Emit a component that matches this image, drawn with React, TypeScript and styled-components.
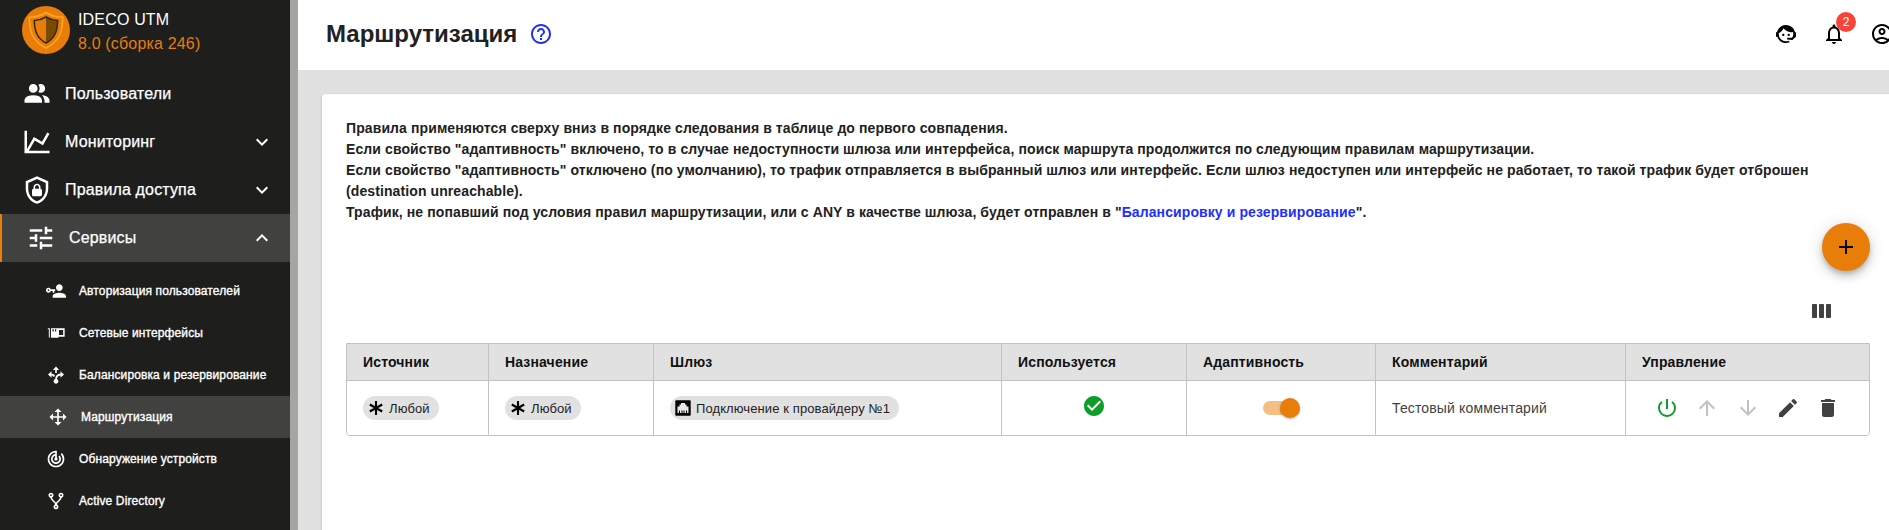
import React from 'react';
import styled, { createGlobalStyle } from 'styled-components';
import {
  MdAdd, MdArrowDownward, MdArrowUpward, MdCheckCircle, MdDelete, MdEdit, MdExpandLess, MdExpandMore,
  MdHelpOutline, MdNotificationsNone, MdOutlineAccountCircle, MdPowerSettingsNew, MdTrackChanges, MdTune,
} from 'react-icons/md';

const Global = createGlobalStyle`
  * { box-sizing: border-box; }
  html, body { margin: 0; overflow: hidden; }
  body { font-family: "Liberation Sans", Arial, sans-serif; font-size: 14px; color: #212121; background: #e1e1e1; }
  svg { display: block; flex: none; }
`;

const Page = styled.div`
  display: flex;
  width: 100%;
  height: 530px;
  overflow: hidden;
`;

const Sidebar = styled.nav`
  flex: none;
  width: 298px;
  background: #1e1e1c;
  border-right: 8px solid #a6a5a1;
  color: #fff;
`;

const Brand = styled.div`
  display: flex;
  height: 70px;
  padding: 6px 0 0 22px;
  gap: 8px;
`;

const BrandText = styled.div`
  padding-top: 2px;
  font-size: 16px;
  line-height: 24px;
  letter-spacing: 0.17px;
`;

const Version = styled.div`
  color: #e87d09;
`;

const NavRow = styled.div<{ $active?: boolean }>`
  display: flex;
  align-items: center;
  height: 48px;
  padding: 0 16px 0 ${p => (p.$active ? 24 : 22)}px;
  border-left: ${p => (p.$active ? '2px solid #e87d09' : '0')};
  background: ${p => (p.$active ? '#414140' : 'transparent')};
  font-size: 16px;
  letter-spacing: 0.15px;
  -webkit-text-stroke: 0.25px #fff;
  svg { stroke-width: 0; }
`;

const NavLabel = styled.span`
  flex: 1;
  margin-left: 13px;
`;

const SubList = styled.div`
  padding-top: 8px;
`;

const SubRow = styled.div<{ $active?: boolean }>`
  display: flex;
  align-items: center;
  gap: 13px;
  height: 42px;
  padding-left: ${p => (p.$active ? 48 : 46)}px;
  background: ${p => (p.$active ? '#414140' : 'transparent')};
  font-size: 12px;
  letter-spacing: 0.12px;
  white-space: nowrap;
  -webkit-text-stroke: 0.35px #fff;
  svg { stroke-width: 0; }
`;

const Main = styled.main`
  flex: none;
  width: 1620px;
`;

const Header = styled.header`
  display: flex;
  align-items: center;
  height: 70px;
  padding: 0 24px 0 28px;
  background: #fff;
`;

const Title = styled.h1`
  margin: 0 12px 2px 0;
  font-size: 24px;
  line-height: 28px;
  font-weight: 700;
`;

const HelpIcon = styled(MdHelpOutline)`
  margin-top: -2px;
  color: #1f2fff;
`;

const HeaderActions = styled.div`
  display: flex;
  gap: 24px;
  margin: -2px 0 0 auto;
  color: #000;
`;

const BellWrap = styled.div`
  position: relative;
`;

const Badge = styled.span`
  position: absolute;
  left: 14px;
  top: -10px;
  width: 20px;
  height: 20px;
  border-radius: 50%;
  background: #f8433a;
  color: #fff;
  font: 12px/20px Roboto, sans-serif;
  text-align: center;
`;

const Card = styled.section`
  height: 500px;
  margin: 24px 24px 0;
  padding: 24px;
  background: #fff;
  border-radius: 4px;
  box-shadow: 0 1px 3px rgba(0, 0, 0, 0.2);
`;

const Info = styled.p`
  margin: 0;
  font-weight: 700;
  line-height: 21px;
  letter-spacing: 0.1px;
  white-space: nowrap;
`;

const Link = styled.a`
  color: #1f2fff;
`;

const Fab = styled.button`
  display: flex;
  align-items: center;
  justify-content: center;
  width: 48px;
  height: 48px;
  margin: 0 0 0 auto;
  padding: 0;
  border: 0;
  border-radius: 50%;
  background: #e87d09;
  color: #000;
  box-shadow: 0 3px 5px -1px rgba(0, 0, 0, 0.2), 0 6px 10px rgba(0, 0, 0, 0.14), 0 1px 18px rgba(0, 0, 0, 0.12);
`;

const TableTools = styled.div`
  display: flex;
  justify-content: flex-end;
  height: 72px;
  padding: 33px 38px 0 0;
`;

const Table = styled.div`
  width: 1524px;
  border: 1px solid #c2c2c2;
  border-radius: 0 0 4px 4px;
  overflow: hidden;
`;

const Row = styled.div<{ $head?: boolean }>`
  display: grid;
  grid-template-columns: 141px 165px 348px 185px 189px 250px 244px;
  height: ${p => (p.$head ? 36 : 54)}px;
  background: ${p => (p.$head ? '#e1e1e1' : '#fff')};
  border-bottom: ${p => (p.$head ? '1px solid #c2c2c2' : '0')};
  box-sizing: content-box;
  color: ${p => (p.$head ? '#111' : '#424242')};
  font-weight: ${p => (p.$head ? 700 : 400)};
  letter-spacing: 0.14px;
`;

const Cell = styled.div<{ $center?: boolean }>`
  display: flex;
  align-items: center;
  justify-content: ${p => (p.$center ? 'center' : 'flex-start')};
  padding: 0 16px;
  & + & { border-left: 1px solid #c2c2c2; }
`;

const Chip = styled.span`
  display: flex;
  align-items: center;
  gap: 5px;
  height: 24px;
  padding: 0 9px 0 5px;
  border-radius: 12px;
  background: #e1e1e1;
  color: #212121;
  font-size: 13px;
  letter-spacing: 0.1px;
`;

const CheckIcon = styled(MdCheckCircle)`
  margin-top: -5px;
  color: #0b9f27;
`;

const Track = styled.span`
  display: flex;
  align-items: center;
  justify-content: flex-end;
  width: 36px;
  height: 14px;
  border-radius: 7px;
  background: #f4be84;
`;

const Thumb = styled.span`
  flex: none;
  width: 20px;
  height: 20px;
  margin-right: -1px;
  border-radius: 50%;
  background: #e87d09;
  box-shadow: 0 1px 2px rgba(0, 0, 0, 0.3);
`;

const Actions = styled.div`
  display: flex;
  gap: 16.25px;
  padding-left: 13px;
  color: #424242;
`;

const Power = styled(MdPowerSettingsNew)`
  color: #0b9f27;
`;
const MoveUp = styled(MdArrowUpward)`
  color: #c2c2c2;
`;
const MoveDown = styled(MdArrowDownward)`
  color: #c2c2c2;
`;

const Glyph = ({ d, size }: { d: string; size: number }) => (
  <svg width={size} height={size} viewBox="0 0 24 24" fill="currentColor" fillRule="evenodd"><path d={d} /></svg>
);

const paths = {
  users: 'M16 17V19H2V17S2 13 9 13 16 17 16 17M12.5 7.5A3.5 3.5 0 1 0 9 11 3.5 3.5 0 0 0 12.5 7.5M15.94 13A5.32 5.32 0 0 1 18 17V19H22V17S22 13.37 15.94 13M15 4A3.39 3.39 0 0 0 13.07 4.59A5 5 0 0 1 13.07 10.41A3.39 3.39 0 0 0 15 11A3.5 3.5 0 0 0 15 4Z',
  chart: 'M16,11.78L20.24,4.45L21.97,5.45L16.74,14.5L10.23,10.75L5.46,19H22V21H2V3H4V17.54L9.5,8L16,11.78Z',
  shield: 'M21,11C21,16.55 17.16,21.74 12,23C6.84,21.74 3,16.55 3,11V5L12,1L21,5V11M12,21C15.75,20 19,15.54 19,11.22V6.3L12,3.18L5,6.3V11.22C5,15.54 8.25,20 12,21M14.8,11C15.4,11 16,11.6 16,12.3V15.8C16,16.4 15.4,17 14.7,17H9.2C8.6,17 8,16.4 8,15.7V12.2C8,11.6 8.6,11 9.2,11V9.5C9.2,8.1 10.6,7 12,7C13.4,7 14.8,8.1 14.8,9.5V11M13.5,11V9.5C13.5,8.7 12.8,8.2 12,8.2C11.2,8.2 10.5,8.7 10.5,9.5V11H13.5Z',
  key: 'M11 10V12H10V14H8V12H5.8C5.4 13.2 4.3 14 3 14C1.3 14 0 12.7 0 11S1.3 8 3 8C4.3 8 5.4 8.8 5.8 10H11M3 10C2.4 10 2 10.4 2 11S2.4 12 3 12 4 11.6 4 11 3.6 10 3 10M16 14C18.7 14 24 15.3 24 18V20H8V18C8 15.3 13.3 14 16 14M16 12C13.8 12 12 10.2 12 8S13.8 4 16 4 20 5.8 20 8 18.2 12 16 12Z',
  card: 'M2.2 6.2H4.6V17.5H3.400V7.400H2.200ZM6 6.200H22.400V16.400H15V17.600H6ZM7.800 7.600V10.200H9.300V7.600ZM10.800 7.600V10.200H12.300V7.600ZM15.600 8.300V14.400H20.600V8.300Z',
  move: 'M13,6V11H18V7.75L22.25,12L18,16.25V13H13V18H16.25L12,22.25L7.75,18H11V13H6V16.25L1.75,12L6,7.75V11H11V6H7.75L12,1.75L16.25,6H13Z',
  fork: 'M6,2A3,3 0 0,1 9,5C9,6.28 8.19,7.38 7.06,7.81C7.15,8.27 7.39,8.83 8,9.63C9,10.92 11,12.83 12,14.17C13,12.83 15,10.92 16,9.63C16.61,8.83 16.85,8.27 16.94,7.81C15.81,7.38 15,6.28 15,5A3,3 0 0,1 18,2A3,3 0 0,1 21,5C21,6.32 20.14,7.45 18.95,7.85C18.87,8.37 18.64,9 18,9.83C17,11.17 15,13.08 14,14.38C13.39,15.17 13.15,15.73 13.06,16.19C14.19,16.62 15,17.72 15,19A3,3 0 0,1 12,22A3,3 0 0,1 9,19C9,17.72 9.81,16.62 10.94,16.19C10.85,15.73 10.61,15.17 10,14.38C9,13.08 7,11.17 6,9.83C5.36,9 5.13,8.37 5.05,7.85C3.86,7.45 3,6.32 3,5A3,3 0 0,1 6,2M6,4A1,1 0 0,0 5,5A1,1 0 0,0 6,6A1,1 0 0,0 7,5A1,1 0 0,0 6,4M18,4A1,1 0 0,0 17,5A1,1 0 0,0 18,6A1,1 0 0,0 19,5A1,1 0 0,0 18,4M12,18A1,1 0 0,0 11,19A1,1 0 0,0 12,20A1,1 0 0,0 13,19A1,1 0 0,0 12,18Z',
  agent: 'M18.72,14.76C19.07,13.91 19.26,13 19.26,12C19.26,11.28 19.15,10.59 18.96,9.95C18.31,10.1 17.63,10.18 16.92,10.18C13.86,10.18 11.15,8.67 9.5,6.34C8.61,8.5 6.91,10.26 4.77,11.22C4.73,11.47 4.73,11.74 4.73,12A7.27,7.27 0 0,0 12,19.27C13.05,19.27 14.06,19.04 14.97,18.63C15.54,19.72 15.8,20.26 15.78,20.26C14.14,20.81 12.87,21.08 12,21.08C9.58,21.08 7.27,20.13 5.57,18.42C4.53,17.38 3.76,16.11 3.33,14.73H2V10.18H3.09C3.93,6.04 7.6,2.92 12,2.92C14.4,2.92 16.71,3.87 18.42,5.58C19.69,6.84 20.54,8.45 20.89,10.18H22V14.67H22V14.69L22,14.73H21.94L18.38,18L13.08,17.4V15.73H17.91L18.72,14.76M9.27,11.77C9.57,11.77 9.86,11.89 10.07,12.11C10.28,12.32 10.4,12.61 10.4,12.91C10.4,13.21 10.28,13.5 10.07,13.71C9.86,13.92 9.57,14.04 9.27,14.04C8.64,14.04 8.13,13.54 8.13,12.91C8.13,12.28 8.64,11.77 9.27,11.77M14.72,11.77C15.35,11.77 15.85,12.28 15.85,12.91C15.85,13.54 15.35,14.04 14.72,14.04C14.09,14.04 13.58,13.54 13.58,12.91A1.14,1.14 0 0,1 14.72,11.77Z',
};

const Logo = () => (
  <svg width="48" height="48" viewBox="0 0 48 48">
    <circle cx="24" cy="24" r="24" fill="#e87d09" />
    <path d="M24 6.5C19 10 13 11 7.3 11.3C7.5 24 9.5 35 24 42C38.5 35 40.5 24 40.7 11.3C35 11 29 10 24 6.5Z" fill="#e87d09" stroke="#ffa51f" strokeWidth="1.6" />
    <path d="M24 11C20 13.5 16.5 14.3 12.3 14.6C12.5 24 14.5 32 24 37C33.5 32 35.5 24 35.7 14.6C31.5 14.3 28 13.5 24 11Z" fill="#e87d09" />
    <path d="M24 11C28 13.5 31.5 14.3 35.7 14.6C35.5 24 33.5 32 24 37Z" fill="#7a4a00" />
    <path d="M24 11C20 13.5 16.5 14.3 12.3 14.6C12.5 24 14.5 32 24 37C33.5 32 35.5 24 35.7 14.6C31.5 14.3 28 13.5 24 11Z" fill="none" stroke="#2b2a20" strokeWidth="1.5" />
  </svg>
);

const BalanceIcon = () => (
  <svg width="20" height="20" viewBox="0 0 20 20" fill="#fff">
    <path d="M10 1.5L13.2 5H10.8V8H9.2V5H6.8ZM2 9.5L5.5 6.3V8.7C7.5 8.7 8.5 9.5 9 11L7.4 12C6.9 10.8 6.5 10.4 5.5 10.4V12.7ZM18 9.5L14.5 6.3V8.6C11 9 9.2 11 9.2 15H10.9C10.9 12.2 12 10.7 14.500 10.400V12.700Z" />
    <circle cx="10" cy="16.300" r="2.400" />
  </svg>
);

const Asterisk = () => (
  <svg width="16" height="16" viewBox="0 0 16 16" stroke="#000" strokeWidth="2.1">
    <path d="M8 1V15M1.8 4.500L14.200 11.500M14.200 4.500L1.800 11.500" />
  </svg>
);

const EthernetIcon = () => (
  <svg width="16" height="16" viewBox="0 0 16 16">
    <rect x="0.300" y="0.300" width="15.400" height="15.400" rx="1" fill="#000" />
    <path d="M2.500 13V6.500H4.500V4.500H6V3H10V4.500H11.500V6.500H13.500V13H12V10.500H11V13H9.500V10.500H8.500V13H7.500V10.500H6.500V13H5V10.500H4V13Z" fill="#e8e8e8" />
  </svg>
);

const ColumnsIcon = () => (
  <svg width="20" height="14" viewBox="0 0 20 14" fill="#424242">
    <rect x="0" width="5" height="14" rx="0.800" /><rect x="7" width="5" height="14" rx="0.800" /><rect x="14" width="5" height="14" rx="0.800" />
  </svg>
);

const subItems: { label: string; icon: React.ReactNode; active?: boolean }[] = [
  { label: 'Авторизация пользователей', icon: <Glyph d={paths.key} size={20} /> },
  { label: 'Сетевые интерфейсы', icon: <Glyph d={paths.card} size={20} /> },
  { label: 'Балансировка и резервирование', icon: <BalanceIcon /> },
  { label: 'Маршрутизация', icon: <Glyph d={paths.move} size={20} />, active: true },
  { label: 'Обнаружение устройств', icon: <MdTrackChanges size={20} /> },
  { label: 'Active Directory', icon: <Glyph d={paths.fork} size={20} /> },
];

const columns = ['Источник', 'Назначение', 'Шлюз', 'Используется', 'Адаптивность', 'Комментарий', 'Управление'];

export default function App() {
  return (
    <Page>
      <Global />
      <Sidebar>
        <Brand>
          <Logo />
          <BrandText>IDECO UTM<Version>8.0 (сборка 246)</Version></BrandText>
        </Brand>
        <NavRow><Glyph d={paths.users} size={30} /><NavLabel>Пользователи</NavLabel></NavRow>
        <NavRow><Glyph d={paths.chart} size={30} /><NavLabel>Мониторинг</NavLabel><MdExpandMore size={24} /></NavRow>
        <NavRow><Glyph d={paths.shield} size={30} /><NavLabel>Правила доступа</NavLabel><MdExpandMore size={24} /></NavRow>
        <NavRow $active><MdTune size={30} /><NavLabel>Сервисы</NavLabel><MdExpandLess size={24} /></NavRow>
        <SubList>
          {subItems.map(i => <SubRow key={i.label} $active={i.active}>{i.icon}{i.label}</SubRow>)}
        </SubList>
      </Sidebar>
      <Main>
        <Header>
          <Title>Маршрутизация</Title>
          <HelpIcon size={24} />
          <HeaderActions>
            <Glyph d={paths.agent} size={24} />
            <BellWrap><MdNotificationsNone size={24} /><Badge>2</Badge></BellWrap>
            <MdOutlineAccountCircle size={24} />
          </HeaderActions>
        </Header>
        <Card>
          <Info>
            Правила применяются сверху вниз в порядке следования в таблице до первого совпадения.<br />
            Если свойство "адаптивность" включено, то в случае недоступности шлюза или интерфейса, поиск маршрута продолжится по следующим правилам маршрутизации.<br />
            Если свойство "адаптивность" отключено (по умолчанию), то трафик отправляется в выбранный шлюз или интерфейс. Если шлюз недоступен или интерфейс не работает, то такой трафик будет отброшен<br />
            (destination unreachable).<br />
            Трафик, не попавший под условия правил маршрутизации, или с ANY в качестве шлюза, будет отправлен в "<Link>Балансировку и резервирование</Link>".
          </Info>
          <Fab><MdAdd size={24} /></Fab>
          <TableTools><ColumnsIcon /></TableTools>
          <Table>
            <Row $head>{columns.map(c => <Cell key={c}>{c}</Cell>)}</Row>
            <Row>
              <Cell><Chip><Asterisk />Любой</Chip></Cell>
              <Cell><Chip><Asterisk />Любой</Chip></Cell>
              <Cell><Chip><EthernetIcon />Подключение к провайдеру №1</Chip></Cell>
              <Cell $center><CheckIcon size={24} /></Cell>
              <Cell $center><Track><Thumb /></Track></Cell>
              <Cell>Тестовый комментарий</Cell>
              <Cell>
                <Actions><Power size={24} /><MoveUp size={24} /><MoveDown size={24} /><MdEdit size={24} /><MdDelete size={24} /></Actions>
              </Cell>
            </Row>
          </Table>
        </Card>
      </Main>
    </Page>
  );
}
